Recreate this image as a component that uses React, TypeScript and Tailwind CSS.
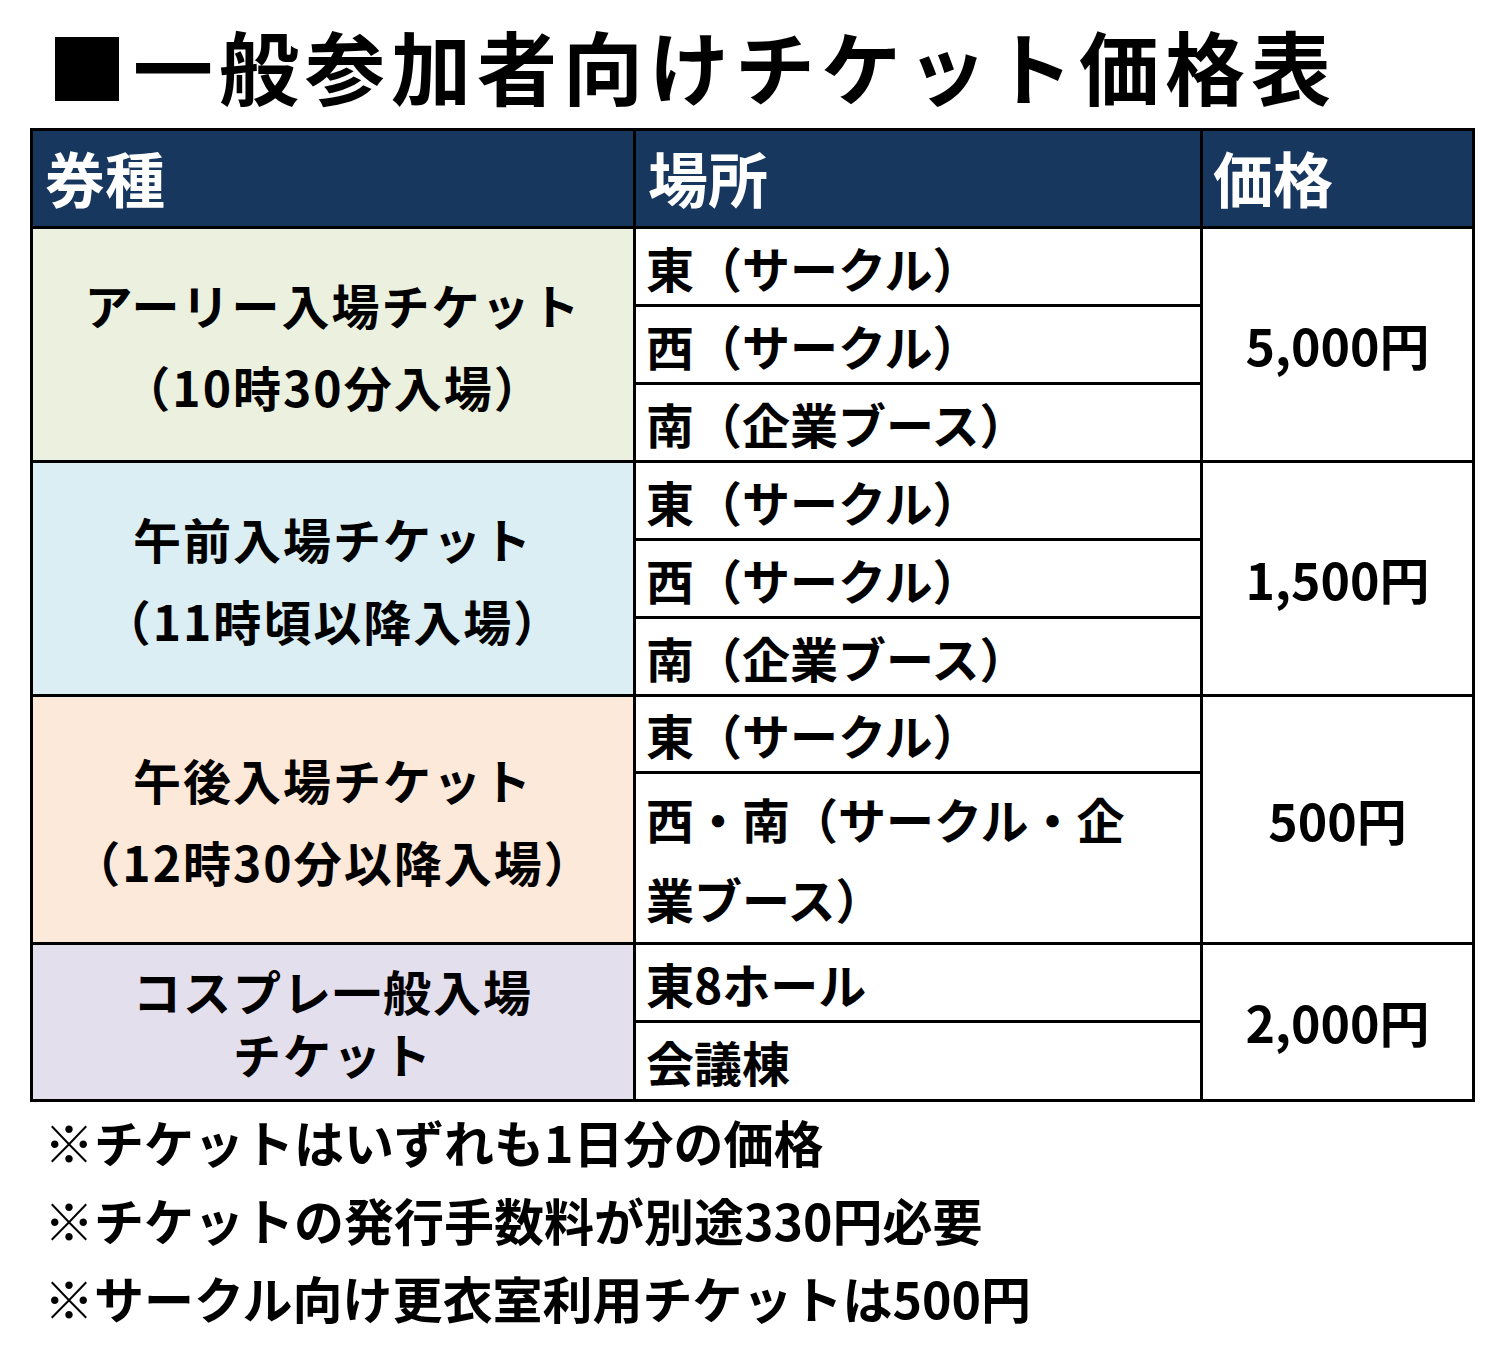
import React from 'react';

type Group = {
  label: string[];
  bg: string;
  places: { text: React.ReactNode; h: string }[];
  price: string;
};

const groups: Group[] = [
  {
    label: ['アーリー入場チケット', '（10時30分入場）'],
    bg: 'bg-[#ebf1de]',
    places: [
      { text: '東（サークル）', h: 'h-[78px]' },
      { text: '西（サークル）', h: 'h-[78px]' },
      { text: '南（企業ブース）', h: 'h-[78px]' },
    ],
    price: '5,000円',
  },
  {
    label: ['午前入場チケット', '（11時頃以降入場）'],
    bg: 'bg-[#daeef3]',
    places: [
      { text: '東（サークル）', h: 'h-[78px]' },
      { text: '西（サークル）', h: 'h-[78px]' },
      { text: '南（企業ブース）', h: 'h-[78px]' },
    ],
    price: '1,500円',
  },
  {
    label: ['午後入場チケット', '（12時30分以降入場）'],
    bg: 'bg-[#fde9d9]',
    places: [
      { text: '東（サークル）', h: 'h-[77px]' },
      {
        text: (
          <>
            西・南（サークル・企
            <br />
            業ブース）
          </>
        ),
        h: 'h-[171px]',
      },
    ],
    price: '500円',
  },
  {
    label: ['コスプレ一般入場', 'チケット'],
    bg: 'bg-[#e4dfec]',
    places: [
      { text: '東8ホール', h: 'h-[78px]' },
      { text: '会議棟', h: 'h-[79px]' },
    ],
    price: '2,000円',
  },
];

const notes = [
  '※チケットはいずれも1日分の価格',
  '※チケットの発行手数料が別途330円必要',
  '※サークル向け更衣室利用チケットは500円',
];

const cell = 'border-[3px] border-black';

export default function App() {
  return (
    <div className="w-[1500px] min-h-[1351px] bg-white text-black font-bold font-['Noto_Sans_CJK_JP','Noto_Sans',sans-serif]">
      {/* Title */}
      <div className="h-[128px] flex items-center pl-[47px]">
        <h1 className="text-[80px] leading-none tracking-[6px] font-bold">■一般参加者向けチケット価格表</h1>
      </div>

      {/* Price table */}
      <div className="pl-[30px]">
        <table className="table-fixed border-collapse w-[1442px]">
          <colgroup>
            <col className="w-[603px]" />
            <col className="w-[567px]" />
            <col className="w-[272px]" />
          </colgroup>
          <thead>
            <tr className="h-[98px] bg-[#17375e] text-white text-[60px] leading-none">
              <th className={`${cell} text-left font-bold pl-[12px] pb-[4px]`}>券種</th>
              <th className={`${cell} text-left font-bold pl-[12px] pb-[4px]`}>場所</th>
              <th className={`${cell} text-left font-bold pl-[10px] pb-[4px]`}>価格</th>
            </tr>
          </thead>
          <tbody>
            {groups.map((g, gi) =>
              g.places.map((p, pi) => (
                <tr key={`${gi}-${pi}`} className={p.h}>
                  {pi === 0 && (
                    <td
                      rowSpan={g.places.length}
                      className={`${cell} ${g.bg} text-center text-[48px] tracking-[2px]`}
                    >
                      {g.label.map((l) => (
                        <div key={l} className={gi === 3 ? 'leading-[63px]' : 'leading-[82px]'}>
                          {l}
                        </div>
                      ))}
                    </td>
                  )}
                  <td className={`${cell} bg-white text-left pl-[10px] text-[48px] align-middle`}>
                    <div className={pi === 1 && gi === 2 ? 'leading-[80px]' : 'leading-[70px]'}>{p.text}</div>
                  </td>
                  {pi === 0 && (
                    <td
                      rowSpan={g.places.length}
                      className={`${cell} bg-white text-center text-[50px] leading-none pb-[2px]`}
                    >
                      {g.price}
                    </td>
                  )}
                </tr>
              ))
            )}
          </tbody>
        </table>
      </div>

      {/* Notes */}
      <div className="pl-[44px]">
        {notes.map((n) => (
          <p key={n} className="text-[50px] leading-[78px]">
            {n}
          </p>
        ))}
      </div>
    </div>
  );
}
